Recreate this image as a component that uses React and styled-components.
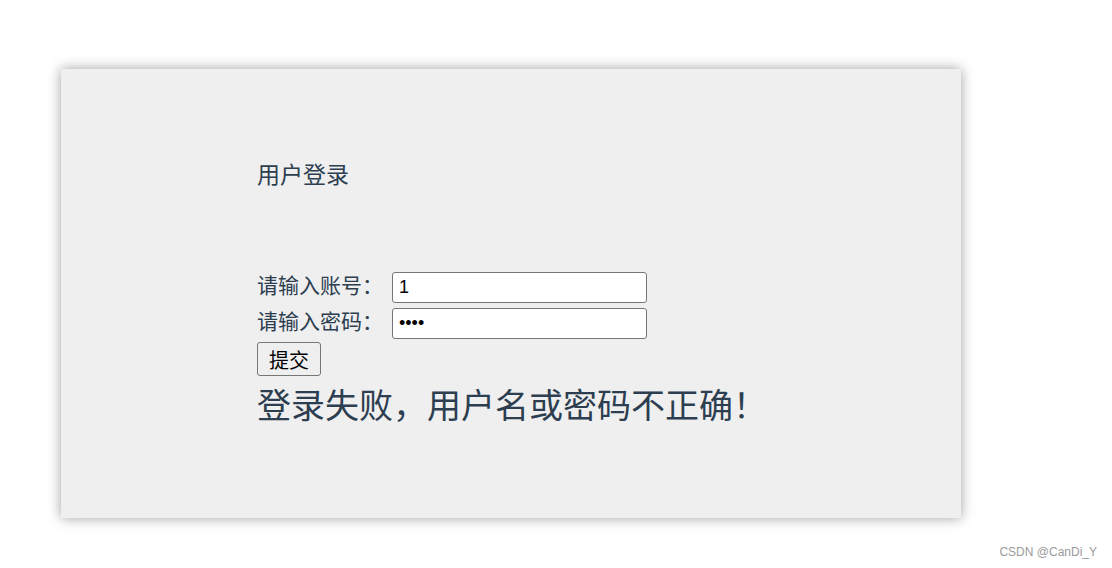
import React, { useState } from "react";
import styled, { createGlobalStyle } from "styled-components";

const GlobalStyle = createGlobalStyle`
  html, body {
    margin: 0;
    padding: 0;
    background: #ffffff;
  }
  body {
    font-family: "Liberation Sans", "Noto Sans CJK SC", sans-serif;
  }
`;

const Page = styled.div`
  position: relative;
  width: 1112px;
  height: 568px;
  padding: 69px 0 0 61px;
  box-sizing: border-box;
`;

const Panel = styled.div`
  width: 900px;
  height: 449px;
  background: #efefef;
  box-shadow: 0 0 12px rgba(0, 0, 0, 0.38);
  padding: 92px 0 0 196px;
  box-sizing: border-box;
  color: #2c3e50;
`;

const Title = styled.div`
  font-size: 23px;
  line-height: 28px;
  margin: 0 0 83px;
`;

const Row = styled.div`
  display: flex;
  align-items: center;
  height: 31px;
  margin-bottom: ${(p) => p.$gap || 5}px;
  font-size: 21px;
`;

const Label = styled.span`
  width: 135px;
  line-height: 26px;
  padding-bottom: 4px;
  white-space: nowrap;
`;

const Field = styled.input`
  width: 255px;
  height: 31px;
  box-sizing: border-box;
  border: 1px solid #767676;
  border-radius: 3px;
  background: #fff;
  padding: 1px 6px;
  font-family: "Liberation Sans", "Noto Sans CJK SC", sans-serif;
  font-size: 18px;
  color: #000;
  outline: none;
`;

const Submit = styled.button`
  display: block;
  height: 34px;
  width: 64px;
  padding: 0;
  border: 1px solid #767676;
  border-radius: 3px;
  background: #efefef;
  color: #000;
  font-family: "Liberation Sans", "Noto Sans CJK SC", sans-serif;
  font-size: 20px;
`;

const Message = styled.div`
  font-size: 34px;
  line-height: 44px;
  margin-top: 8px;
`;

const Watermark = styled.div`
  position: absolute;
  right: 15px;
  bottom: 9px;
  font-size: 12px;
  color: #9a9a9a;
  font-family: "Liberation Sans", sans-serif;
`;

export default function App() {
  const [account, setAccount] = useState("1");
  const [password, setPassword] = useState("1234");

  return (
    <>
      <GlobalStyle />
      <Page>
        <Panel>
          <Title>用户登录</Title>
          <Row>
            <Label>请输入账号：</Label>
            <Field value={account} onChange={(e) => setAccount(e.target.value)} />
          </Row>
          <Row $gap={3}>
            <Label>请输入密码：</Label>
            <Field
              type="password"
              value={password}
              onChange={(e) => setPassword(e.target.value)}
            />
          </Row>
          <Submit>提交</Submit>
          <Message>登录失败，用户名或密码不正确！</Message>
        </Panel>
        <Watermark>CSDN @CanDi_Y</Watermark>
      </Page>
    </>
  );
}
